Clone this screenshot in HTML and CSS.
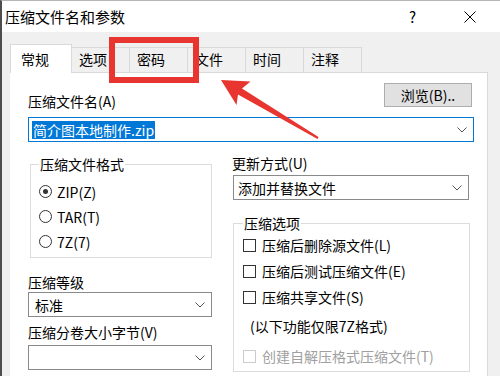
FILE: index.html
```html
<!DOCTYPE html>
<html lang="zh-CN">
<head>
    <meta charset="UTF-8">
    <meta name="viewport" content="width=device-width, initial-scale=1.0">
    <title>压缩文件名和参数</title>
    <link rel="stylesheet" href="styles.css">
</head>
<body>
    <div class="dialog">
        <div class="titlebar">
            <span class="title">压缩文件名和参数</span>
            <span class="help">?</span>
            <svg class="close" width="12" height="12" viewBox="0 0 12 12">
                <path d="M0.5 0.5 L11.5 11.5 M11.5 0.5 L0.5 11.5" stroke="#000" stroke-width="1" fill="none"/>
            </svg>
        </div>

        <div class="tabs">
            <div class="tab active">常规</div>
            <div class="tab">选项</div>
            <div class="tab">密码</div>
            <div class="tab">文件</div>
            <div class="tab">时间</div>
            <div class="tab">注释</div>
        </div>

        <div class="panel">
            <div class="name-row">
                <label class="name-label">压缩文件名(A)</label>
                <button class="browse" type="button">浏览(B)..</button>
            </div>
            <div class="combo combo-name">
                <span class="selected-text">简介图本地制作.zip</span>
                <svg class="chevron" width="10" height="6" viewBox="0 0 10 6"><path d="M0.5 0.5 L5 5 L9.5 0.5" stroke="#555" fill="none"/></svg>
            </div>

            <div class="columns">
                <div class="col-left">
                    <fieldset class="group group-format">
                        <legend>压缩文件格式</legend>
                        <div class="option-row"><span class="radio checked"></span>ZIP(Z)</div>
                        <div class="option-row"><span class="radio"></span>TAR(T)</div>
                        <div class="option-row"><span class="radio"></span>7Z(7)</div>
                    </fieldset>

                    <div class="field-label level-label">压缩等级</div>
                    <div class="combo combo-level">
                        <span>标准</span>
                        <svg class="chevron" width="10" height="6" viewBox="0 0 10 6"><path d="M0.5 0.5 L5 5 L9.5 0.5" stroke="#555" fill="none"/></svg>
                    </div>

                    <div class="field-label volume-label">压缩分卷大小字节(V)</div>
                    <div class="combo combo-volume">
                        <span></span>
                        <svg class="chevron" width="10" height="6" viewBox="0 0 10 6"><path d="M0.5 0.5 L5 5 L9.5 0.5" stroke="#555" fill="none"/></svg>
                    </div>
                </div>

                <div class="col-right">
                    <div class="field-label update-label">更新方式(U)</div>
                    <div class="combo combo-update">
                        <span>添加并替换文件</span>
                        <svg class="chevron" width="10" height="6" viewBox="0 0 10 6"><path d="M0.5 0.5 L5 5 L9.5 0.5" stroke="#555" fill="none"/></svg>
                    </div>

                    <fieldset class="group group-options">
                        <legend>压缩选项</legend>
                        <div class="check-row"><span class="checkbox"></span>压缩后删除源文件(L)</div>
                        <div class="check-row"><span class="checkbox"></span>压缩后测试压缩文件(E)</div>
                        <div class="check-row"><span class="checkbox"></span>压缩共享文件(S)</div>
                        <div class="note-row">(以下功能仅限7Z格式)</div>
                        <div class="check-row disabled"><span class="checkbox"></span>创建自解压格式压缩文件(T)</div>
                    </fieldset>
                </div>
            </div>
        </div>

        <!-- red highlight on the password tab -->
        <div class="callout"></div>
        <svg class="arrow" width="498" height="375" viewBox="2 1 498 375">
            <polygon points="221,80 250.5,81.5 242,88.5 318.5,137 317.5,139 238,94.5 236.5,105" fill="#e8352f"/>
        </svg>
    </div>
</body>
</html>
```

FILE: styles.css
```css
body {
    margin: 0;
    font-family: "Noto Sans CJK SC", sans-serif;
    font-size: 14px;
    color: #000;
    background-color: #f0f0f0;
}
.dialog {
    position: relative;
    width: 500px;
    height: 376px;
    box-sizing: border-box;
    border-top: 1px solid #b5b5b5;
    border-left: 2px solid #4d4d4d;
    background-color: #f0f0f0;
    overflow: hidden;
}
.titlebar {
    height: 31px;
    background: #fff;
    display: flex;
    align-items: center;
    padding: 0 24px 0 3px;
}
.title {
    flex: 1;
    font-size: 15px;
    line-height: 20px;
}
.help {
    width: 10px;
    font-size: 15px;
    line-height: 20px;
    margin-right: 45px;
}
.close {
    display: block;
}
.tabs {
    height: 40px;
    display: flex;
    align-items: flex-end;
    padding-left: 8px;
}
.tab {
    width: 58px;
    height: 25px;
    box-sizing: border-box;
    padding-left: 7px;
    line-height: 23px;
    background: #f0f0f0;
    border-top: 1px solid #d9d9d9;
    border-right: 1px solid #d9d9d9;
}
.tab.active {
    position: relative;
    width: 62px;
    height: 29px;
    margin-bottom: -1px;
    padding-left: 10px;
    line-height: 28px;
    background: #fff;
    border-left: 1px solid #d9d9d9;
}
.panel {
    margin-left: 8px;
    width: 478px;
    height: 310px;
    box-sizing: border-box;
    background: #fff;
    border-top: 1px solid #d9d9d9;
    border-right: 1px solid #d9d9d9;
    padding: 10px 13px 0 18px;
}
.name-row {
    height: 24px;
    display: flex;
    justify-content: space-between;
    align-items: flex-end;
}
.name-label {
    line-height: 18px;
    margin-bottom: -3px;
}
.browse {
    width: 88px;
    height: 24px;
    margin-right: 2px;
    padding: 0;
    font-family: inherit;
    font-size: 14px;
    color: #000;
    background: #e1e1e1;
    border: 1px solid #adadad;
}
.combo {
    height: 25px;
    box-sizing: border-box;
    display: flex;
    align-items: center;
    justify-content: space-between;
    padding: 0 6px;
    border: 1px solid #8a8a8a;
    background: #fff;
    line-height: 18px;
}
.combo-name {
    margin-top: 10px;
    padding-left: 3px;
    border-color: #0078d7;
}
.selected-text {
    background: #0078d7;
    color: #fff;
    padding: 0 1px;
}
.chevron {
    display: block;
    flex: none;
}
.columns {
    display: flex;
    gap: 20px;
    margin-top: 13px;
}
.col-left {
    width: 184px;
}
.col-right {
    width: 238px;
}
.group {
    margin: 0;
    border: 1px solid #dcdcdc;
    min-width: 0;
}
.group legend {
    padding: 0 1px;
    line-height: 18px;
}
.group-format {
    margin-left: 2px;
    padding: 6px 0 3px 8px;
}
.option-row {
    height: 25px;
    display: flex;
    align-items: center;
    line-height: 18px;
}
.radio {
    width: 13px;
    height: 13px;
    box-sizing: border-box;
    border: 1px solid #333;
    border-radius: 50%;
    margin-right: 5px;
    display: flex;
    align-items: center;
    justify-content: center;
}
.radio.checked::after {
    content: "";
    width: 5px;
    height: 5px;
    border-radius: 50%;
    background: #333;
}
.field-label {
    line-height: 18px;
}
.level-label {
    margin-top: 15px;
}
.combo-level {
    margin-top: 1px;
}
.volume-label {
    margin-top: 6px;
}
.combo-volume {
    margin-top: 4px;
}
.update-label {
    margin-top: -1px;
}
.combo-update {
    margin-top: 3px;
    margin-left: 1px;
    width: 236px;
    padding-left: 4px;
}
.group-options {
    margin: 14px 0 0 1px;
    width: 237px;
    box-sizing: border-box;
    padding: 0 0 1px 9px;
}
.check-row {
    height: 26px;
    display: flex;
    align-items: center;
    line-height: 18px;
}
.checkbox {
    width: 13px;
    height: 13px;
    box-sizing: border-box;
    border: 1px solid #333;
    background: #fff;
    margin-right: 6px;
}
.note-row {
    height: 32px;
    display: flex;
    align-items: center;
    padding-left: 7px;
    line-height: 18px;
}
.check-row.disabled {
    height: 28px;
    color: #a0a0a0;
}
.check-row.disabled .checkbox {
    border-color: #cccccc;
}
.callout {
    position: absolute;
    left: 107px;
    top: 36px;
    width: 90px;
    height: 46px;
    box-sizing: border-box;
    border: 6px solid #e8352f;
}
.arrow {
    position: absolute;
    left: 0;
    top: 0;
    pointer-events: none;
}
```
